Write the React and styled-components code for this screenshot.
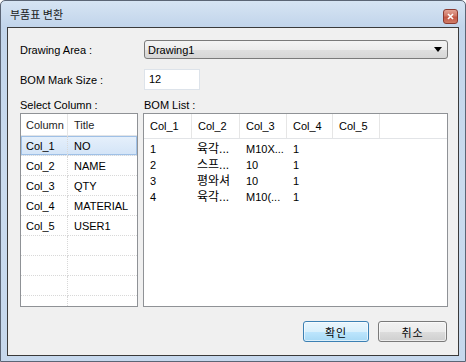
import React from "react";
import styled, { createGlobalStyle } from "styled-components";

const GlobalStyle = createGlobalStyle`
  html, body {
    margin: 0;
    padding: 0;
    background: #ffffff;
  }
  body {
    font-family: "Liberation Sans", "Noto Sans CJK KR", sans-serif;
    font-size: 11px;
    color: #000;
  }
`;

const Frame = styled.div`
  width: 466px;
  height: 362px;
  box-sizing: border-box;
  border: 1px solid #5b6575;
  border-radius: 5px 5px 0 0;
  background: linear-gradient(180deg, #d6e4f3 0%, #c2d5eb 7%, #cadbee 50%, #c6d8ed 100%);
  padding: 0 6px 5px 6px;
  display: flex;
  flex-direction: column;
`;

const TitleBar = styled.div`
  height: 26px;
  margin: 0 -6px;
  padding: 0 7px 0 9px;
  display: flex;
  align-items: center;
  justify-content: space-between;
`;

const Title = styled.span`
  font-family: "Noto Sans CJK KR", sans-serif;
  font-size: 11px;
  color: #1a1a1a;
`;

const CloseButton = styled.div`
  width: 15px;
  height: 15px;
  margin-top: 4px;
  box-sizing: border-box;
  border: 1px solid #8a3a30;
  border-radius: 3px;
  background: linear-gradient(180deg, #e3a395 0%, #cf7664 45%, #c25442 55%, #d07d68 100%);
  display: flex;
  align-items: center;
  justify-content: center;
`;

const Body = styled.div`
  flex: 1;
  border: 1px solid #3a3a3a;
  background: #f0f0f0;
  padding: 12px 10px 13px 12px;
  display: flex;
  flex-direction: column;
`;

const FormRow = styled.div`
  display: grid;
  grid-template-columns: 124px 1fr;
  align-items: center;
  margin-top: ${(p) => p.$gap || 0}px;
`;

const Label = styled.span`
  line-height: 14px;
`;

const Select = styled.div`
  height: 19px;
  box-sizing: border-box;
  border: 1px solid #7a7a7a;
  border-radius: 3px;
  background: linear-gradient(180deg, #f4f4f4 0%, #ececec 50%, #dfdfdf 51%, #d6d6d6 100%);
  display: flex;
  align-items: center;
  justify-content: space-between;
  padding: 0 5px 0 3px;
`;

const Input = styled.div`
  width: 56px;
  height: 21px;
  box-sizing: border-box;
  border: 1px solid #dde3ea;
  background: #ffffff;
  padding: 3px 0 0 4px;
`;

const SectionLabels = styled.div`
  display: grid;
  grid-template-columns: 124px 1fr;
  margin-top: 8px;
  line-height: 14px;
`;

const Panels = styled.div`
  display: flex;
  gap: 5px;
  height: 194px;
  margin-top: 1px;
`;

const ColumnTable = styled.div`
  width: 118px;
  box-sizing: border-box;
  border: 1px solid #8f9296;
  background: #ffffff;
  overflow: hidden;
  display: grid;
  grid-template-columns: 47px 1fr;
  grid-auto-rows: 20px;
  grid-template-rows: 22px;
`;

const HeadCell = styled.div`
  display: flex;
  align-items: center;
  padding-left: ${(p) => p.$pad}px;
  border-right: ${(p) => (p.$sep ? "1px solid #e6e6e6" : "none")};
  border-bottom: 1px solid #e2e4e7;
  color: #1e1e1e;
`;

const Cell = styled.div`
  display: flex;
  align-items: center;
  padding-left: ${(p) => p.$pad}px;
  border-right: ${(p) => (p.$sep ? "1px dotted #d8d8d8" : "none")};
  border-bottom: 1px dotted #d8d8d8;
  white-space: nowrap;
  background: ${(p) => (p.$selected ? "linear-gradient(180deg, #e6f0fb 0%, #d3e4f7 100%)" : "transparent")};
  box-shadow: ${(p) =>
    p.$selected
      ? p.$sep
        ? "inset 1px 1px 0 #9fc0e6, inset 0 -1px 0 #9fc0e6"
        : "inset -1px 1px 0 #9fc0e6, inset 0 -1px 0 #9fc0e6"
      : "none"};
`;

const ListPanel = styled.div`
  flex: 1;
  box-sizing: border-box;
  border: 1px solid #8f9296;
  background: #ffffff;
  overflow: hidden;
`;

const ListHeader = styled.div`
  display: grid;
  grid-template-columns: 48px 48px 47px 46px 47px 1fr;
  height: 24px;
  border-bottom: 1px solid #e2e4e7;
`;

const ListHeadCell = styled.div`
  display: flex;
  align-items: center;
  padding-left: 6px;
  border-right: ${(p) => (p.$sep ? "1px solid #e6e6e6" : "none")};
`;

const ListBody = styled.div`
  padding-top: 2px;
`;

const ListRow = styled.div`
  display: grid;
  grid-template-columns: 48px 48px 47px 46px 47px 1fr;
  height: 16px;
  align-items: center;
`;

const ListCell = styled.span`
  padding-left: ${(p) => (p.$ko ? 5 : 6)}px;
  white-space: nowrap;
  overflow: hidden;
  font-size: ${(p) => (p.$ko ? 12 : 11)}px;
  line-height: 16px;
`;

const ButtonRow = styled.div`
  margin-top: auto;
  display: flex;
  justify-content: flex-end;
  gap: 9px;
  padding-right: 1px;
`;

const Button = styled.div`
  width: ${(p) => p.$w}px;
  height: 21px;
  box-sizing: border-box;
  border: 1px solid ${(p) => (p.$primary ? "#3c80b3" : "#7a7a7a")};
  border-radius: 3px;
  background: ${(p) =>
    p.$primary
      ? "linear-gradient(180deg, #eaf6fd 0%, #d9f0fc 50%, #bee6fd 51%, #a7d9f5 100%)"
      : "linear-gradient(180deg, #f2f2f2 0%, #ebebeb 50%, #dddddd 51%, #cfcfcf 100%)"};
  box-shadow: inset 0 0 0 1px rgba(255, 255, 255, 0.6);
  display: flex;
  align-items: center;
  justify-content: center;
  font-family: "Noto Sans CJK KR", sans-serif;
  font-size: 11px;
  letter-spacing: 1px;
`;

const columns = [
  ["Col_1", "NO"],
  ["Col_2", "NAME"],
  ["Col_3", "QTY"],
  ["Col_4", "MATERIAL"],
  ["Col_5", "USER1"],
  ["", ""],
  ["", ""],
  ["", ""],
  ["", ""],
];

const bomRows = [
  ["1", "육각...", "M10X...", "1"],
  ["2", "스프...", "10", "1"],
  ["3", "평와셔", "10", "1"],
  ["4", "육각...", "M10(...", "1"],
];

const listHeads = ["Col_1", "Col_2", "Col_3", "Col_4", "Col_5"];

export default function App() {
  return (
    <>
      <GlobalStyle />
      <Frame>
        <TitleBar>
          <Title>부품표 변환</Title>
          <CloseButton>
            <svg width="7" height="7" viewBox="0 0 7 7">
              <path d="M1 1 L6 6 M6 1 L1 6" stroke="#ffffff" strokeWidth="1.6" />
            </svg>
          </CloseButton>
        </TitleBar>
        <Body>
          <FormRow>
            <Label>Drawing Area :</Label>
            <Select>
              <span>Drawing1</span>
              <svg width="8" height="5" viewBox="0 0 8 5">
                <polygon points="0,0 8,0 4,5" fill="#000" />
              </svg>
            </Select>
          </FormRow>
          <FormRow $gap={10}>
            <Label>BOM Mark Size :</Label>
            <Input>12</Input>
          </FormRow>
          <SectionLabels>
            <span>Select Column :</span>
            <span>BOM List :</span>
          </SectionLabels>
          <Panels>
            <ColumnTable>
              <HeadCell $pad={5} $sep>Column</HeadCell>
              <HeadCell $pad={6}>Title</HeadCell>
              {columns.map(([col, title], i) => (
                <React.Fragment key={i}>
                  <Cell $pad={5} $sep $selected={i === 0}>{col}</Cell>
                  <Cell $pad={6} $selected={i === 0}>{title}</Cell>
                </React.Fragment>
              ))}
            </ColumnTable>
            <ListPanel>
              <ListHeader>
                {listHeads.map((h) => (
                  <ListHeadCell key={h} $sep>{h}</ListHeadCell>
                ))}
                <ListHeadCell />
              </ListHeader>
              <ListBody>
                {bomRows.map((row, i) => (
                  <ListRow key={i}>
                    {row.map((v, j) => (
                      <ListCell key={j} $ko={j === 1}>{v}</ListCell>
                    ))}
                  </ListRow>
                ))}
              </ListBody>
            </ListPanel>
          </Panels>
          <ButtonRow>
            <Button $w={66} $primary>확인</Button>
            <Button $w={69}>취소</Button>
          </ButtonRow>
        </Body>
      </Frame>
    </>
  );
}
